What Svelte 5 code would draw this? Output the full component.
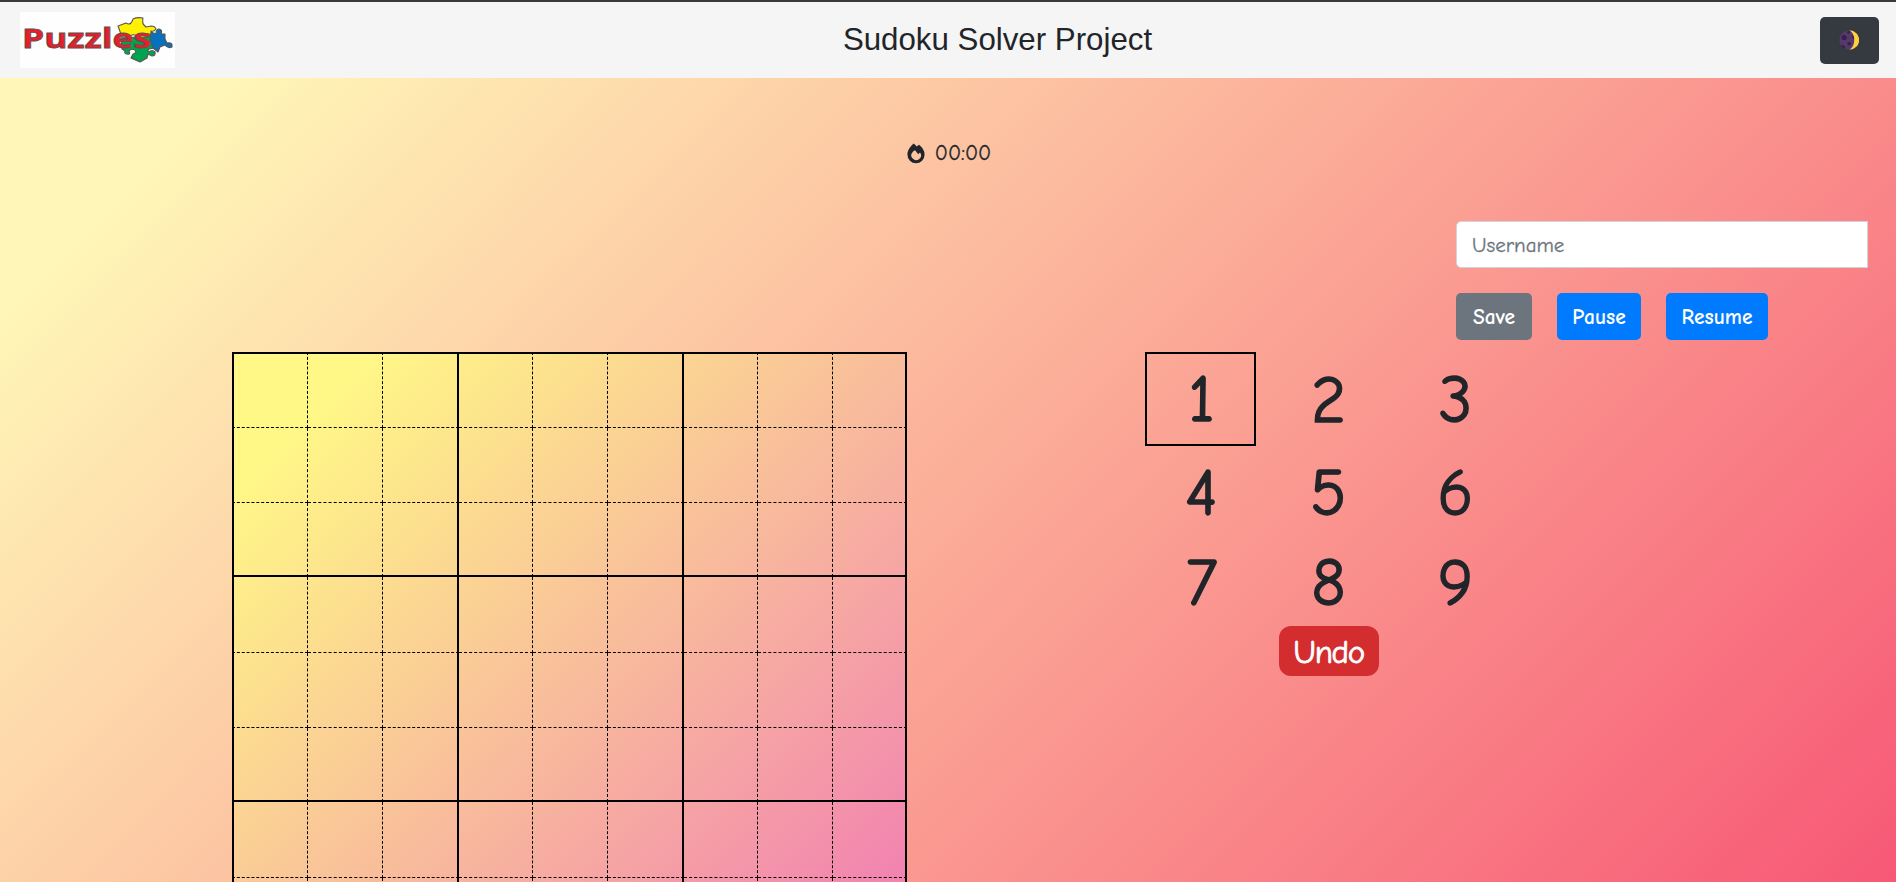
<script>
  const cells = Array.from({ length: 81 }, (_, i) => ({ row: Math.floor(i / 9), col: i % 9 }));
  const digits = [1, 2, 3, 4, 5, 6, 7, 8, 9];
  let selected = $state(1);
  let username = $state('');
</script>

<div class="page">
  <header>
    <svg class="logo" viewBox="0 0 155 56" role="img" aria-label="Puzzles">
      <rect width="155" height="56" fill="#fefefe" />
      <g stroke="#5a5550" stroke-width="1.1" stroke-linejoin="round">
        <path fill="#00a34f" d="M101 26 L134 24 L134 36 L129 37 Q127 39 129 40 Q132 37 135 40 Q136 44 132 44 L128 42 L127 46 L120 50 L111 46 L113 42 Q117 41 115 38 Q111 36 109 39 Q111 43 107 42 Q104 42 105 39 L102 37 Z" />
        <path fill="#fff100" d="M102 25 L98 14 L106 11 Q109 13 111 11 Q113 8 113 7 Q117 5 123 6 Q122 11 124 13 L126 15 L131 14 Q135 14 136 17 Q134 20 131 19 L132 22 L128 25 Q119 27 117 24 Q112 21 110 25 Z" />
        <path fill="#0871bd" d="M131 20 L136 22 Q136 17 139 17 Q143 18 141 22 L145 22 L145 27 L147 31 Q153 30 152 35 Q148 37 145 33 L140 35 L138 40 L133 36 L130 28 Z" />
      </g>
      <text class="logo-text" x="2" y="36" textLength="129" lengthAdjust="spacingAndGlyphs">Puzzles</text>
    </svg>
    <h1>Sudoku Solver Project</h1>
    <button class="theme" aria-label="Theme">
      <svg viewBox="0 0 20 20" width="20" height="20">
        <circle cx="10" cy="10" r="9.7" fill="#553968" />
        <path fill="#ffcf3e" d="M10.5 .3 A9.7 9.7 0 0 1 10.5 19.7 Q15.5 16 15.2 10 Q15.5 4 10.5 .3 Z" />
        <g fill="#36214b">
          <circle cx="5.2" cy="7.5" r="2.6" />
          <circle cx="10.1" cy="13.7" r="1.8" />
          <circle cx="9.6" cy="2.3" r="1.4" />
          <path d="M2 15.2 Q5 14.5 6.2 17 L6 18.7 Q3.5 17.5 2 15.2 Z" />
          <path d="M14 5 Q12.5 6 13.2 8 L15 9 Z" />
        </g>
      </svg>
    </button>
  </header>

  <div class="timer">
    <svg viewBox="0 0 18 21" width="18" height="21">
      <path fill="#212529" fill-rule="evenodd" d="M6.5 .6 Q8.6 2 9.8 3.6 Q11 2.2 12.1 1.7 Q17.6 6.2 17.6 11.5 A8.6 8.8 0 0 1 .4 11.5 Q.4 6.2 6.5 .6 Z M5.7 9 A4.8 4.8 0 1 0 13 9.4 L11.2 11.3 L8.1 7.3 Q6.4 8 5.7 9 Z" />
    </svg>
    <span>00:00</span>
  </div>

  <div class="controls">
    <input placeholder="Username" bind:value={username} />
    <div class="buttons">
      <button class="btn save">Save</button>
      <button class="btn pause">Pause</button>
      <button class="btn resume">Resume</button>
    </div>
  </div>

  <main>
    <div class="board">
      {#each cells as c}
        <div
          class="cell"
          class:first-col={c.col === 0}
          class:first-row={c.row === 0}
          class:thick-right={c.col % 3 === 2}
          class:thick-bottom={c.row % 3 === 2}
        ></div>
      {/each}
    </div>
    <div class="pad">
      <div class="digits">
        {#each digits as n}
          <button class="digit" class:selected={selected === n} onclick={() => (selected = n)}>{n}</button>
        {/each}
      </div>
      <button class="undo">Undo</button>
    </div>
  </main>
</div>

<style>
  :global(body) {
    margin: 0;
    overflow: hidden;
  }
  .page {
    box-sizing: border-box;
    height: 1240px;
    border-top: 2px solid #3c393b;
    background: linear-gradient(135deg, #fff6b7 10%, #f6416c 100%);
    color: #212529;
    font-family: 'Comic Neue', Lato, sans-serif;
    font-size: 20px;
  }
  button {
    font: inherit;
    color: inherit;
    border: 0;
    padding: 0;
    background: none;
  }
  header {
    box-sizing: border-box;
    height: 76px;
    padding: 0 17px 0 20px;
    display: flex;
    align-items: center;
    justify-content: space-between;
    background: #f5f5f5;
  }
  .logo {
    width: 155px;
    height: 56px;
  }
  .logo-text {
    font-family: 'Open Sans', sans-serif;
    font-weight: 700;
    font-size: 26.5px;
    fill: #e5202b;
    stroke: #6d4a49;
    stroke-width: 0.8;
  }
  h1 {
    margin: 0 0 0 96px;
    flex: 1;
    text-align: center;
    font: 400 31.25px/38px 'Liberation Sans', Arial, sans-serif;
    position: relative;
    left: -48px;
  }
  .theme {
    width: 59px;
    height: 47px;
    border-radius: 5px;
    background: #343a40;
    display: flex;
    align-items: center;
    justify-content: center;
  }
  .theme svg {
    margin-right: 1px;
  }
  .timer {
    display: flex;
    align-items: center;
    justify-content: center;
    gap: 10px;
    height: 30px;
    margin: 60px 0 53px 2px;
  }
  .timer span {
    font-size: 21.5px;
    -webkit-text-stroke: 0.3px #212529;
  }
  .controls {
    width: 412px;
    margin-left: 1456px;
    height: 131px;
  }
  input {
    box-sizing: border-box;
    display: block;
    width: 412px;
    height: 47px;
    padding: 0 15px;
    border: 1px solid #ced4da;
    border-radius: 5px 0 0 5px;
    outline: 0;
    font: inherit;
    font-size: 21px;
  }
  input::placeholder {
    color: #6c757d;
    opacity: 1;
    -webkit-text-stroke: 0.3px #6c757d;
  }
  .buttons {
    display: flex;
    gap: 25px;
    margin-top: 25px;
  }
  .btn {
    height: 47px;
    border-radius: 5px;
    background: #007bff;
    color: #fff;
    font-size: 21.5px;
    font-weight: 700;
  }
  .save {
    width: 76px;
    background: #6c757d;
  }
  .pause {
    width: 84px;
  }
  .resume {
    width: 102px;
  }
  main {
    display: flex;
    align-items: flex-start;
    padding-left: 232px;
  }
  .board {
    display: grid;
    grid-template-columns: 76px 75px 76px 74px 75px 76px 74px 75px 74px;
    grid-template-rows: 76px 75px 74px 76px 75px 74px 76px 75px 74px;
    background: linear-gradient(135deg, #fff886 10%, #f072b6 100%);
  }
  .cell {
    border: 0 dashed #000;
    border-right-width: 1px;
    border-bottom-width: 1px;
  }
  .first-col {
    border-left: 2px solid #000;
  }
  .first-row {
    border-top: 2px solid #000;
  }
  .thick-right {
    border-right: 2px solid #000;
  }
  .thick-bottom {
    border-bottom: 2px solid #000;
  }
  .pad {
    margin-left: 238px;
    display: flex;
    flex-direction: column;
    align-items: center;
  }
  .digits {
    display: grid;
    grid-template-columns: repeat(3, 111px);
    grid-template-rows: 94px 90px 90px;
    column-gap: 16px;
  }
  .digit {
    font-size: 67px;
    line-height: 88px;
    font-weight: 500;
    -webkit-text-stroke: 1.4px #212529;
    padding: 4px 0 0 2px;
  }
  .selected {
    padding-top: 2px;
    border: 2px solid #000;
  }
  .undo {
    width: 100px;
    height: 50px;
    border-radius: 12px;
    background: #d32d2f;
    color: #fff;
    font-size: 33px;
    letter-spacing: -1.4px;
    -webkit-text-stroke: 0.8px #fff;
    margin-left: 2px;
    padding-top: 1px;
  }
</style>
